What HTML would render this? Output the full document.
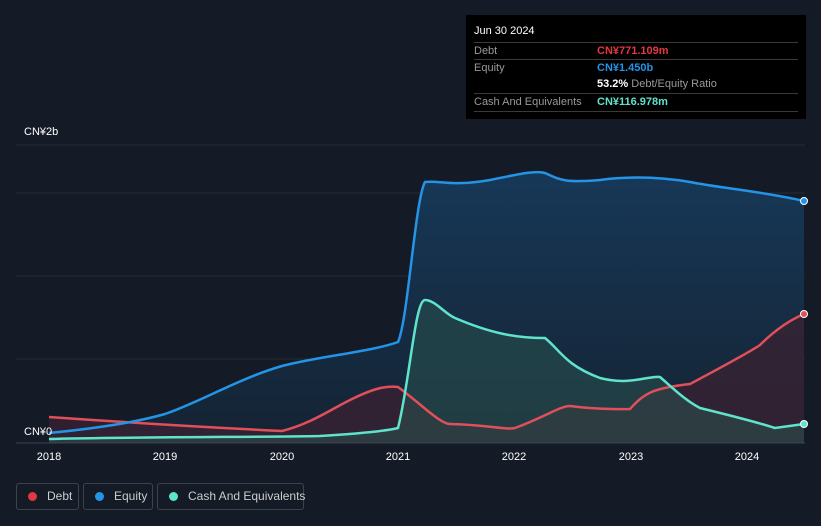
<!DOCTYPE html>
<html><head><meta charset="utf-8"><style>
body{margin:0;width:821px;height:526px;background:#151b26;font-family:"Liberation Sans",sans-serif;overflow:hidden;position:relative}
.tt{position:absolute;left:466px;top:15px;width:340px;height:104px;background:#000;color:#fff;font-size:11px}
.row{position:absolute;left:8px;width:324px;border-top:1px solid #3a3a3a;height:17px}
.lab{position:absolute;left:0;color:#999}
.val{position:absolute;left:123px;font-weight:bold}
.leg{position:absolute;top:483px;height:27px;border:1px solid #3d434d;border-radius:3px;color:#ccc;font-size:12px;line-height:25px;box-sizing:border-box;white-space:nowrap}
.dot{display:inline-block;width:9px;height:9px;border-radius:50%;margin:0 10px 0 11px;vertical-align:-1px}
</style></head><body>
<svg width="821" height="526" style="position:absolute;left:0;top:0">
<defs>
<linearGradient id="ge" x1="0" y1="0" x2="0" y2="1"><stop offset="0" stop-color="#163857"/><stop offset="1" stop-color="#152333"/></linearGradient>
</defs>
<g stroke="#262c37" stroke-width="1">
<line x1="16" y1="145" x2="805" y2="145"/><line x1="16" y1="193" x2="805" y2="193"/><line x1="16" y1="276" x2="805" y2="276"/><line x1="16" y1="359" x2="805" y2="359"/>
</g>
<path d="M49,433 C80,430 130,424 165,414 C200,402 240,378 282,366 C320,356 370,352 398,342 C408,320 415,200 425,182 C440,180 450,187 490,180 C515,175 535,170 545,173 C560,180 565,183 600,180 C630,176 660,177 690,182 C720,188 760,191 804,201 L804,443 L49,443Z" fill="url(#ge)"/>
<path d="M49,417 C120,422 200,427 282,431 C310,424 330,410 350,400 C370,390 385,385 398,387 C420,403 440,424 450,424 C490,425 505,430 515,428 C545,417 560,406 570,406 C600,410 630,409 630,409 C645,392 655,388 690,384 C720,368 750,352 760,345 C775,330 790,320 804,314 L804,443 L49,443Z" fill="#3a2232" fill-opacity=".75"/>
<path d="M49,439 C120,437 282,437 320,436 C370,433 390,430 398,428 C410,380 415,300 425,300 C435,300 445,314 455,318 C490,333 515,338 545,338 C560,350 565,365 600,378 C630,386 650,375 660,377 C675,390 685,400 700,408 C720,413 750,420 775,428 C790,426 804,424 804,424 L804,443 L49,443Z" fill="#2a524f" fill-opacity=".55"/>
<path d="M49,417 C120,422 200,427 282,431 C310,424 330,410 350,400 C370,390 385,385 398,387 C420,403 440,424 450,424 C490,425 505,430 515,428 C545,417 560,406 570,406 C600,410 630,409 630,409 C645,392 655,388 690,384 C720,368 750,352 760,345 C775,330 790,320 804,314" fill="none" stroke="#e0505a" stroke-width="2.5"/>
<path d="M49,439 C120,437 282,437 320,436 C370,433 390,430 398,428 C410,380 415,300 425,300 C435,300 445,314 455,318 C490,333 515,338 545,338 C560,350 565,365 600,378 C630,386 650,375 660,377 C675,390 685,400 700,408 C720,413 750,420 775,428 C790,426 804,424 804,424" fill="none" stroke="#5fe3cc" stroke-width="2.5"/>
<path d="M49,433 C80,430 130,424 165,414 C200,402 240,378 282,366 C320,356 370,352 398,342 C408,320 415,200 425,182 C440,180 450,187 490,180 C515,175 535,170 545,173 C560,180 565,183 600,180 C630,176 660,177 690,182 C720,188 760,191 804,201" fill="none" stroke="#2394e6" stroke-width="2.5"/>
<line x1="16" y1="443" x2="805" y2="443" stroke="#3d434d"/>
<circle cx="804" cy="201" r="3.5" fill="#2394e6" stroke="#fff" stroke-width="1"/>
<circle cx="804" cy="314" r="3.5" fill="#e0505a" stroke="#fff" stroke-width="1"/>
<circle cx="804" cy="424" r="3.5" fill="#5fe3cc" stroke="#fff" stroke-width="1"/>
<g fill="#fff" font-size="11" font-family="Liberation Sans">
<text x="24" y="135">CN¥2b</text><text x="24" y="435">CN¥0</text>
<g text-anchor="middle"><text x="49" y="460">2018</text><text x="165" y="460">2019</text><text x="282" y="460">2020</text><text x="398" y="460">2021</text><text x="514" y="460">2022</text><text x="631" y="460">2023</text><text x="747" y="460">2024</text></g>
</g>
</svg>
<div class="tt">
<div style="position:absolute;left:8px;top:10px">Jun 30 2024</div>
<div class="row" style="top:27px"><span class="lab" style="top:2px">Debt</span><span class="val" style="top:2px;color:#e0393f">CN¥771.109m</span></div>
<div class="row" style="top:44px"><span class="lab" style="top:2px">Equity</span><span class="val" style="top:2px;color:#2394e6">CN¥1.450b</span></div>
<div style="position:absolute;left:131px;top:63px"><b>53.2%</b> <span style="color:#999">Debt/Equity Ratio</span></div>
<div class="row" style="top:78px;border-bottom:1px solid #3a3a3a"><span class="lab" style="top:2px">Cash And Equivalents</span><span class="val" style="top:2px;color:#5fe3cc">CN¥116.978m</span></div>
</div>
<div class="leg" style="left:16px;width:63px"><span class="dot" style="background:#e0393f"></span>Debt</div>
<div class="leg" style="left:83px;width:70px"><span class="dot" style="background:#2394e6"></span>Equity</div>
<div class="leg" style="left:157px;width:147px"><span class="dot" style="background:#5fe3cc"></span>Cash And Equivalents</div>
</body></html>
